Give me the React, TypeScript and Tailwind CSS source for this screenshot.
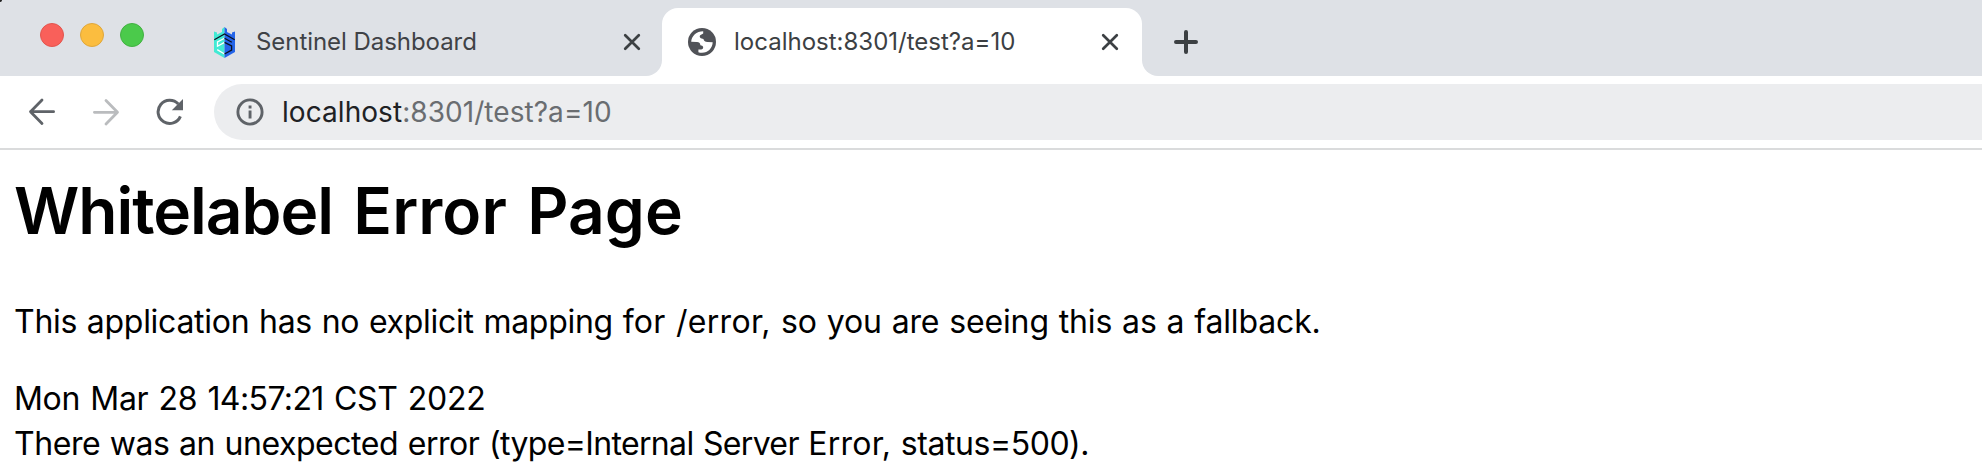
function SentinelIcon() {
  return (
    <svg width="21" height="31" viewBox="0 0 21 31">
      <path d="M0 4.5L3 5.5V7.5L8 5V2L10.5 0V31L0 25Z" fill="#41ead4" />
      <path d="M21 4.5L18 5.5V7.5L13 5V2L10.5 0V31L21 25Z" fill="#2464e8" />
      <path d="M.3 12.8L10.5 7L20.7 12.8" fill="none" stroke="#0a1020" strokeWidth="1.3" />
      <path d="M10.5 11.2L3.5 15V19.2L10.5 15.4M3.2 22.6L10.5 27" fill="none" stroke="#fff" strokeWidth="1.3" />
      <path d="M10.5 11.2L17.8 15.2M10.5 15.4L17.6 19V23L10.5 27" fill="none" stroke="#0a1020" strokeWidth="1.3" />
    </svg>
  );
}

function GlobeIcon() {
  return (
    <svg width="28" height="28" viewBox="0 0 28 28">
      <circle cx="14" cy="14" r="14" fill="#505257" />
      <path
        d="M3.2 13.8C3.4 8 8.6 3.3 15.2 3.3V5.6L12.2 7.2C11.4 7.8 11.6 9.6 12.8 10.2L15.4 11C16.2 13.2 17.2 14 19.4 14L24.7 14.2C24.6 20 20 24.6 14 24.8C12.6 24.8 11.4 24.5 10.4 24.2V21.6H13.2C15.4 21.4 15.8 18.8 14.2 17.8L12.4 17.2C12.2 15 11 14 9 13.9Z"
        fill="#fff"
      />
    </svg>
  );
}

function CloseIcon() {
  return (
    <svg width="18" height="18" viewBox="0 0 18 18" fill="none" stroke="#3c4043" strokeWidth="2.7" strokeLinecap="round">
      <path d="M2.2 2.2L15.8 15.8M15.8 2.2L2.2 15.8" />
    </svg>
  );
}

function ArrowIcon({ className }: { className: string }) {
  return (
    <svg className={className} width="28" height="28" viewBox="0 0 28 28" fill="none" stroke="currentColor" strokeWidth="2.8" strokeLinecap="round" strokeLinejoin="round">
      <path d="M14 2L2.5 13.7L14 25.4M2.5 13.7H25.6" />
    </svg>
  );
}

function ReloadIcon() {
  return (
    <svg width="28" height="28" viewBox="0 0 28 28">
      <path d="M24.4 18.3A11.6 11.6 0 1 1 22.3 6" fill="none" stroke="#5f6368" strokeWidth="3" />
      <path d="M27 1V12.2H15.8Z" fill="#5f6368" />
    </svg>
  );
}

function InfoIcon() {
  return (
    <svg width="28" height="28" viewBox="0 0 28 28">
      <circle cx="14" cy="14" r="12.1" fill="none" stroke="#5f6368" strokeWidth="2.9" />
      <path d="M12.6 7.6H15.5V10.4H12.6ZM12.6 12.6H15.5V20.5H12.6Z" fill="#5f6368" />
    </svg>
  );
}

export default function App() {
  return (
    <div className="h-[474px] w-[1982px] overflow-hidden bg-white font-[Inter,'Liberation_Sans',sans-serif]">
      <header>
        <div className="flex h-[76px] bg-[#dee1e6] bg-[radial-gradient(circle_at_0_0,#222_1.5px,transparent_2.5px)] pl-10">
          <div className="flex h-[70px] items-center gap-4">
            <span className="size-6 rounded-full border border-[#e2554e] bg-[#f9605a]" />
            <span className="size-6 rounded-full border border-[#dfa73b] bg-[#fbbd3f]" />
            <span className="size-6 rounded-full border border-[#42b142] bg-[#4bca4b]" />
          </div>
          <div className="flex w-[502px] items-center pt-2 pl-[70px]">
            <SentinelIcon />
            <span className="ml-[21px] flex-1 text-2xl tracking-[-0.05px] whitespace-nowrap text-[#3f4246]">Sentinel Dashboard</span>
            <span className="mr-[5px]">
              <CloseIcon />
            </span>
          </div>
          <div className="flex w-4 bg-white">
            <span className="w-full rounded-br-2xl bg-[#dee1e6]" />
          </div>
          <div className="flex w-[480px] bg-[#dee1e6]">
            <div className="mt-2 flex w-full items-center rounded-t-2xl bg-white pr-[23px] pl-[26px]">
              <GlobeIcon />
              <span className="ml-[18px] flex-1 text-2xl whitespace-nowrap text-[#3c4043]">localhost:8301/test?a=10</span>
              <CloseIcon />
            </div>
          </div>
          <div className="flex flex-1 bg-white">
            <div className="flex flex-1 items-center rounded-bl-2xl bg-[#dee1e6] pt-2 pl-8">
              <svg width="24" height="24" viewBox="0 0 24 24" fill="none" stroke="#3c4043" strokeWidth="4" strokeLinecap="round">
                <path d="M12 2V22M2 12H22" />
              </svg>
            </div>
          </div>
        </div>
        <div className="flex h-[74px] items-start border-b-2 border-[#dadbdc] pt-2">
          <div className="flex h-14 w-[214px] items-center gap-9 pl-7">
            <ArrowIcon className="text-[#5f6368]" />
            <ArrowIcon className="rotate-180 text-[#babcbe]" />
            <ReloadIcon />
          </div>
          <div className="flex h-14 flex-1 items-center rounded-l-full bg-[#ecedef] pl-[22px]">
            <InfoIcon />
            <span className="ml-[18px] text-[28px] leading-9 tracking-[0.06px] whitespace-nowrap text-[#6a6d71]">
              <span className="text-[#202124]">localhost</span>:8301/test?a=10
            </span>
          </div>
        </div>
      </header>
      <main className="px-[14px] pt-4 text-[32px] leading-[45px] whitespace-nowrap text-black">
        <h1 className="mb-[43px] text-[64px] leading-[90px] font-semibold tracking-[0.1px] [word-spacing:4px]">
          <span className="tracking-[-1px]">Whitelabel</span> Error Page
        </h1>
        <p className="mb-8 tracking-[-0.14px] [word-spacing:1px]">
          <span className="tracking-[-0.28px]">This application has no explicit mapping </span>
          <span className="tracking-[0.3px]">for /error, </span>
          so you are seeing this as a fallback.
        </p>
        <p className="tracking-[-0.3px] [word-spacing:1.5px]">
          Mon Mar 28 <span className="tracking-[-0.6px]">14:57:21</span> CST 2022
        </p>
        <p className="tracking-[-0.45px] [word-spacing:1px]">
          There was an unexpected error <span className="tracking-[-0.65px]">(type=Internal Server</span>{" "}
          <span className="tracking-[0.2px]">Error,</span> status=500).
        </p>
      </main>
    </div>
  );
}
